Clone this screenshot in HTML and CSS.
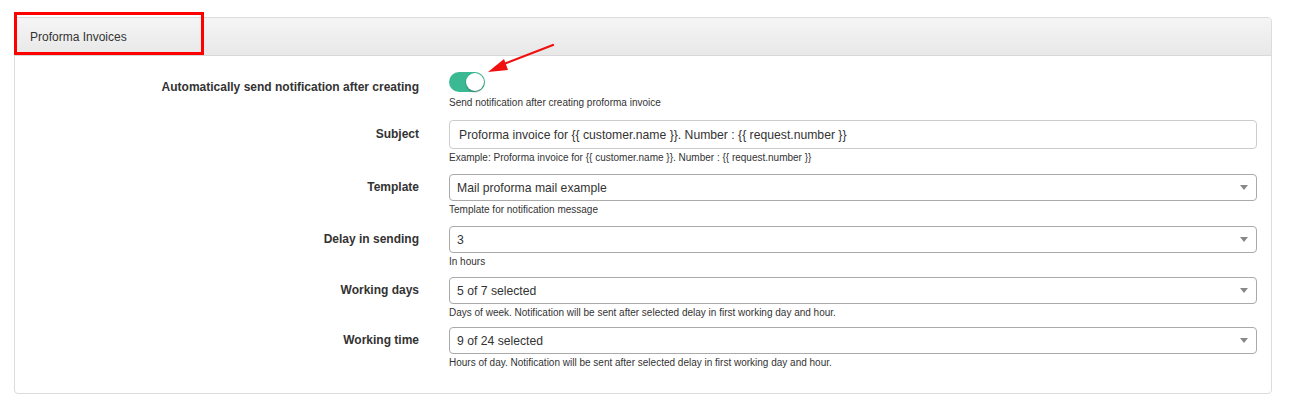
FILE: index.html
```html
<!DOCTYPE html>
<html>
<head>
<meta charset="utf-8">
<link rel="stylesheet" href="styles.css">
</head>
<body>
<div class="page">
  <div class="panel">
    <div class="panel-heading">Proforma Invoices</div>
    <div class="panel-body">
      <div class="row row-toggle">
        <div class="label label-toggle">Automatically send notification after creating</div>
        <div class="field">
          <div class="toggle"><span class="knob"></span></div>
          <div class="help help-toggle">Send notification after creating proforma invoice</div>
        </div>
      </div>
      <div class="row row-subject">
        <div class="label label-input">Subject</div>
        <div class="field">
          <div class="input">Proforma invoice for {{ customer.name }}. Number : {{ request.number }}</div>
          <div class="help">Example: Proforma invoice for {{ customer.name }}. Number : {{ request.number }}</div>
        </div>
      </div>
      <div class="row row-template">
        <div class="label">Template</div>
        <div class="field">
          <div class="select"><span>Mail proforma mail example</span><span class="caret"></span></div>
          <div class="help">Template for notification message</div>
        </div>
      </div>
      <div class="row">
        <div class="label">Delay in sending</div>
        <div class="field">
          <div class="select"><span>3</span><span class="caret"></span></div>
          <div class="help">In hours</div>
        </div>
      </div>
      <div class="row row-days">
        <div class="label">Working days</div>
        <div class="field">
          <div class="select"><span>5 of 7 selected</span><span class="caret"></span></div>
          <div class="help">Days of week. Notification will be sent after selected delay in first working day and hour.</div>
        </div>
      </div>
      <div class="row">
        <div class="label">Working time</div>
        <div class="field">
          <div class="select"><span>9 of 24 selected</span><span class="caret"></span></div>
          <div class="help">Hours of day. Notification will be sent after selected delay in first working day and hour.</div>
        </div>
      </div>
    </div>
  </div>
  <div class="highlight"></div>
  <svg class="arrow" width="80" height="40" viewBox="0 0 80 40">
    <line x1="73" y1="5" x2="16" y2="27" stroke="#f01010" stroke-width="2.2" stroke-linecap="round"/>
    <polygon points="8,32 24,19 28,30" fill="#f01010"/>
  </svg>
</div>
</body>
</html>
```

FILE: styles.css
```css
* { box-sizing: border-box; }
html, body { margin: 0; padding: 0; background: #fff; }
body {
  font-family: "Liberation Sans", Arial, Helvetica, sans-serif;
  color: #333;
}
.page {
  position: relative;
  width: 1291px;
  height: 413px;
  padding: 17px 20px 0 14px;
}
.panel {
  width: 1258px;
  border: 1px solid #dcdcdc;
  border-radius: 4px;
  background: #fff;
}
.panel-heading {
  height: 38px;
  padding: 0 15px;
  display: flex;
  align-items: center;
  font-size: 12px;
  color: #333;
  background: linear-gradient(#f5f5f5, #e8e8e8);
  border-bottom: 1px solid #d8d8d8;
  border-radius: 3px 3px 0 0;
}
.panel-body {
  padding: 16px 14px 23px 0;
  display: flex;
  flex-direction: column;
}
.row {
  display: grid;
  grid-template-columns: 404px 1fr;
  column-gap: 30px;
  margin-bottom: 8px;
}
.row:last-child { margin-bottom: 0; }
.row-toggle { margin-bottom: 10px; }
.row-subject { margin-bottom: 9px; }
.row-template { margin-bottom: 9px; }
.row-days { margin-bottom: 7px; }
.label {
  text-align: right;
  font-size: 12px;
  font-weight: bold;
  line-height: 27px;
  color: #333;
}
.label-input { line-height: 29px; }
.label-toggle { line-height: 14px; padding-top: 8px; }
.field { display: flex; flex-direction: column; }
.help {
  font-size: 10px;
  line-height: 14px;
  margin-top: 2px;
  color: #333;
}
.help-toggle { margin-top: 4px; }
.toggle {
  position: relative;
  width: 36px;
  height: 20px;
  border-radius: 10px;
  background: #3bb993;
}
.knob {
  position: absolute;
  top: 1px;
  right: 1px;
  width: 18px;
  height: 18px;
  border-radius: 50%;
  background: #fff;
  box-shadow: 0 1px 2px rgba(0,0,0,0.35);
}
.input {
  height: 29px;
  border: 1px solid #cccccc;
  border-radius: 4px;
  padding: 0 9px;
  display: flex;
  align-items: center;
  font-size: 12.2px;
  color: #333;
}
.select {
  height: 27px;
  border: 1px solid #aaaaaa;
  border-radius: 4px;
  padding: 0 8px 0 7px;
  display: flex;
  align-items: center;
  justify-content: space-between;
  font-size: 12.2px;
  color: #333;
}
.caret {
  width: 0;
  height: 0;
  border-left: 4px solid transparent;
  border-right: 4px solid transparent;
  border-top: 5px solid #888;
}
.highlight {
  position: absolute;
  left: 14px;
  top: 12px;
  width: 190px;
  height: 43px;
  border: 3px solid #ff0000;
}
.arrow {
  position: absolute;
  left: 480px;
  top: 40px;
}
```
